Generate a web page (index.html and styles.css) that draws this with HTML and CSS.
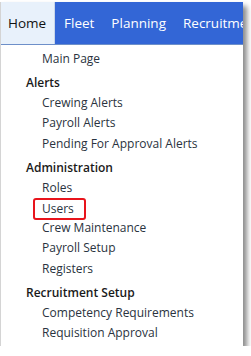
FILE: index.html
```html
<!DOCTYPE html>
<html lang="en">
<head>
  <meta charset="UTF-8">
  <title>Menu</title>
  <link rel="stylesheet" href="styles.css">
</head>
<body>
  <div class="frame">
    <!-- Top tabs -->
    <div class="tabs">
      <div class="tab active">Home</div>
      <div class="tab">Fleet</div>
      <div class="tab">Planning</div>
      <div class="tab">Recruitment</div>
    </div>

    <!-- Dropdown menu -->
    <div class="menu">
      <div class="item">Main Page</div>

      <div class="group">Alerts</div>
      <div class="item">Crewing Alerts</div>
      <div class="item">Payroll Alerts</div>
      <div class="item">Pending For Approval Alerts</div>

      <div class="group">Administration</div>
      <div class="item">Roles</div>
      <div class="item"><span class="marked">Users</span></div>
      <div class="item">Crew Maintenance</div>
      <div class="item">Payroll Setup</div>
      <div class="item">Registers</div>

      <div class="group">Recruitment Setup</div>
      <div class="item">Competency Requirements</div>
      <div class="item">Requisition Approval</div>
    </div>
  </div>
</body>
</html>
```

FILE: styles.css
```css
/* Page */
body {
  margin: 0;
  background: #ffffff;
  font-family: 'Open Sans', sans-serif;
  overflow: hidden;
}

/* Screenshot frame with shadow */
.frame {
  width: 242px;
  height: 344px;
  margin-top: 2px;
  background: white;
  border-left: 1px solid #d4d4d4;
  box-shadow: 4px 4px 5px rgba(0, 0, 0, 0.45);
  overflow: hidden;
}

/* Tab bar */
.tabs {
  display: flex;
  height: 42px;
  background: #3366d6;
  border-bottom: 1px solid #6d8fc9;
  white-space: nowrap;
}

.tab {
  padding: 0 8px 0 9px;
  display: flex;
  align-items: center;
  font-size: 13.5px;
  color: white;
}

.tab.active {
  background: #e8f1fb;
  color: #111;
  width: 38px;
  padding: 0 8px 0 7px;
  border-right: 1px solid #c9d6ea;
}

/* Menu list */
.menu {
  padding: 4px 0 0 25px;
  font-size: 12px;
  color: #2a3340;
}

.item {
  height: 20.2px;
  line-height: 20px;
  padding-left: 16px;
}

.group {
  height: 20px;
  line-height: 20px;
  margin-top: 4px;
  font-weight: 600;
  color: #1a1a1a;
}

.marked {
  display: inline-block;
  margin-left: -9px;
  padding: 0 10px 0 7px;
  border: 2px solid #e8141c;
  border-radius: 3px;
  line-height: 18px;
}
```
